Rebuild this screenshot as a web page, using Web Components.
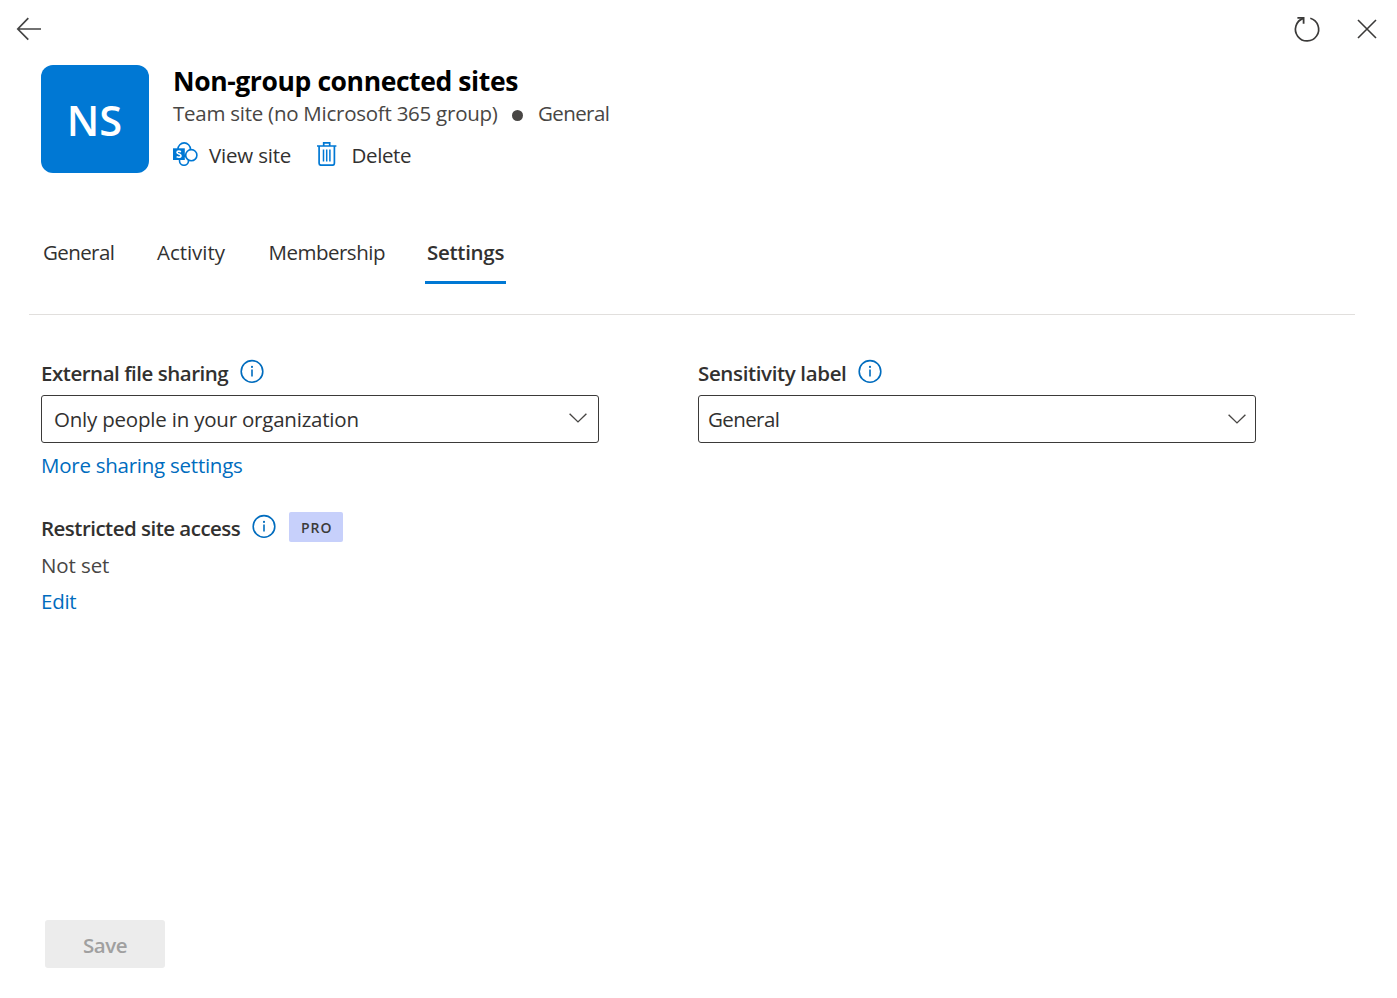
<!DOCTYPE html>
<html lang="en">
<head>
<meta charset="utf-8">
<title>Site details</title>
<style>
html,body{margin:0;height:100%;background:#fff}
body{font-family:"Open Sans","Noto Sans",sans-serif;color:#323130}
</style>
</head>
<body>
<site-panel></site-panel>
<script>
const ICONS = {
  back: [26,26,'<path d="M25 13H2M12.3 2.2 1.8 13 12.3 23.6" fill="none" stroke="#444" stroke-width="1.7"/>'],
  refresh: [28,28,'<path d="M17.3 3.2A11.6 11.6 0 1 1 10.2 3.4" fill="none" stroke="#3b3a39" stroke-width="1.7"/><path d="M4.4 2.8H10.6V8.8" fill="none" stroke="#3b3a39" stroke-width="1.8"/>'],
  close: [20,20,'<path d="M1 1 19 19M19 1 1 19" fill="none" stroke="#3b3a39" stroke-width="1.6"/>'],
  sharepoint: [25,24,'<g fill="#fff" stroke="#0078d4" stroke-width="1.6"><circle cx="11.2" cy="7.1" r="6.2"/><circle cx="11" cy="18.8" r="4.5"/><circle cx="18.3" cy="13.2" r="5.6"/></g><rect x="0" y="6.3" width="11.8" height="11.7" fill="#0078d4"/><path d="M8 9.7C7.2 9.3 6.6 9.1 5.8 9.1 4.6 9.1 4 9.6 4 10.4c0 1.9 4 1.3 4 3.3 0 1-.9 1.6-2.2 1.6-.8 0-1.6-.2-2.2-.6" fill="none" stroke="#fff" stroke-width="1.6"/>'],
  trash: [20,24,'<g fill="none" stroke="#0078d4" stroke-width="1.7"><path d="M0 4H19.4M6.7 4V.9h6V4M2.1 4V21.2Q2.1 23.2 4.1 23.2H15.4Q17.4 23.2 17.4 21.2V4"/><path d="M6.5 7.4V19.6M9.7 7.4V19.6M12.9 7.4V19.6" stroke-width="1.5"/></g>'],
  chevron: [18,10,'<path d="M.6.8 9 8.9 17.4.8" fill="none" stroke="#484644" stroke-width="1.4"/>'],
  info: [24,24,'<circle cx="12" cy="12.4" r="10.8" fill="none" stroke="#006cbe" stroke-width="1.6"/><path d="M12 10.4V17.4" stroke="#006cbe" stroke-width="1.6"/><circle cx="12" cy="7.9" r="1.05" fill="#006cbe"/>']
};
function define(name, html){
  const t=document.createElement('template'); t.innerHTML=html;
  customElements.define(name, class extends HTMLElement{
    constructor(){super();this.attachShadow({mode:'open'}).append(t.content.cloneNode(true));}
  });
}
customElements.define('ui-icon', class extends HTMLElement{
  connectedCallback(){
    const [w,h,b]=ICONS[this.getAttribute('name')];
    this.attachShadow({mode:'open'}).innerHTML=`<style>:host{display:block;flex:none;width:${w}px;height:${h}px}svg{display:block}</style><svg width="${w}" height="${h}" viewBox="0 0 ${w} ${h}">${b}</svg>`;
  }
});
define('ui-text', `<style>:host{display:block;flex:none;font-size:20.5px;line-height:28px;height:28px;white-space:nowrap}</style><slot></slot>`);
define('ui-select', `<style>:host{display:flex;align-items:center;justify-content:space-between;box-sizing:border-box;width:558px;height:48px;border:1px solid #3b3a39;border-radius:3px;padding:0 11px 0 12px}</style><slot></slot>`);
define('ui-badge', `<style>:host{display:block;box-sizing:border-box;width:54px;height:30px;background:#c7d0fb;border-radius:2px;padding-left:12px;font-size:14px;line-height:31px;font-weight:600;color:#3b3a39;letter-spacing:.95px}</style><slot></slot>`);
define('top-bar', `<style>:host{display:flex;justify-content:space-between;align-items:center;height:58px;padding:0 20px 0 16px}div{display:flex;align-items:center;gap:36px}</style>
<ui-icon name="back"></ui-icon><div><ui-icon name="refresh"></ui-icon><ui-icon name="close"></ui-icon></div>`);
define('site-header', `<style>:host{display:flex;gap:24px;padding:5px 41px 0;height:110px}
.av{box-sizing:border-box;width:108px;height:108px;margin-top:2px;padding-right:1px;border-radius:12px;background:#0078d4;color:#fff;font-size:41.5px;font-weight:600;line-height:110px;text-align:center}
.title{font-size:26.5px;line-height:36px;height:36px;font-weight:700;color:#000;letter-spacing:-.4px}
.sub,.act{display:flex;align-items:center;color:#484644}
.act{margin-top:14px;color:#323130}
.dot{width:11px;height:11px;border-radius:50%;background:#484644;margin:5px 15px 0 14px}
</style><div class="av">NS</div><div>
<ui-text class="title">Non-group connected sites</ui-text>
<div class="sub"><ui-text style="width:325px;letter-spacing:-.25px">Team site (no Microsoft 365 group)</ui-text><span class="dot"></span><ui-text style="letter-spacing:-.6px">General</ui-text></div>
<div class="act"><ui-icon name="sharepoint" style="margin:0 11px 2px 0"></ui-icon><ui-text style="width:82px;letter-spacing:-.19px">View site</ui-text><ui-icon name="trash" style="margin:0 14.5px 2px 26px"></ui-icon><ui-text style="letter-spacing:-.38px">Delete</ui-text></div></div>`);
define('tab-bar', `<style>:host{display:flex;gap:41px;margin:65px 42px 0 29px;padding-left:14px;box-sizing:border-box;height:77px;border-bottom:1px solid #e1dfdd}
.on{box-sizing:border-box;width:81px;height:46px;border-bottom:3px solid #0078d4;font-weight:600;padding-left:2px}</style>
<ui-text style="width:73px;letter-spacing:-.6px">General</ui-text><ui-text style="width:70.5px;letter-spacing:-.05px">Activity</ui-text><ui-text style="width:115.5px;letter-spacing:-.5px">Membership</ui-text><div class="on"><ui-text style="letter-spacing:-.28px">Settings</ui-text></div>`);
define('settings-form', `<style>:host{display:flex;gap:99px;padding:44px 41px 0}
.l{display:flex;height:28px;margin-bottom:8px;font-weight:600;gap:11px}
a{display:block;color:#006cbe;text-decoration:none}</style>
<div><div class="l"><ui-text style="width:188px;letter-spacing:-.48px">External file sharing</ui-text><ui-icon name="info"></ui-icon></div>
<ui-select><ui-text style="letter-spacing:-.21px">Only people in your organization</ui-text><ui-icon name="chevron" style="margin-bottom:3px"></ui-icon></ui-select>
<a style="margin-top:8px"><ui-text style="letter-spacing:-.25px">More sharing settings</ui-text></a>
<div class="l" style="margin-top:35px"><ui-text style="width:200px;letter-spacing:-.52px">Restricted site access</ui-text><ui-icon name="info"></ui-icon><ui-badge style="margin:-2px 0 0 2px">PRO</ui-badge></div>
<ui-text style="margin-top:9px;color:#484644;letter-spacing:-.1px">Not set</ui-text>
<a style="margin-top:8px"><ui-text style="letter-spacing:-.25px">Edit</ui-text></a></div>
<div><div class="l"><ui-text style="width:149px;letter-spacing:-.36px">Sensitivity label</ui-text><ui-icon name="info"></ui-icon></div>
<ui-select style="padding:0 9px"><ui-text style="letter-spacing:-.6px">General</ui-text><ui-icon name="chevron" style="margin-bottom:1px"></ui-icon></ui-select></div>`);
define('save-button', `<style>:host{display:flex;justify-content:center;align-items:center;box-sizing:border-box;width:120px;height:48px;padding-top:2px;border-radius:3px;background:#ececec;color:#a0a0a0;font-weight:600;margin:auto 0 30px 45px}</style><ui-text style="letter-spacing:-.45px">Save</ui-text>`);
define('site-panel', `<style>:host{display:flex;flex-direction:column;height:998px;width:1397px}</style><top-bar></top-bar><site-header></site-header><tab-bar></tab-bar><settings-form></settings-form><save-button></save-button>`);
</script>
</body>
</html>
